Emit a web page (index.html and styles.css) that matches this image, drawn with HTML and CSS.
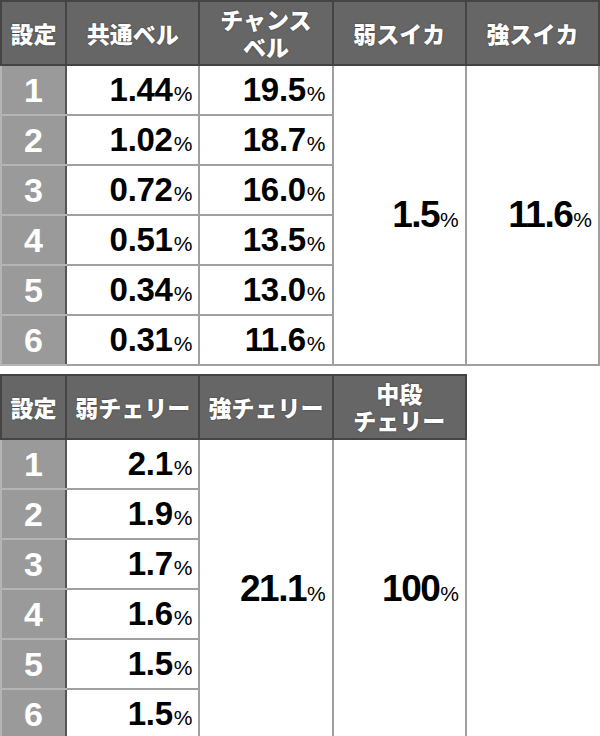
FILE: index.html
```html
<!DOCTYPE html>
<html lang="ja">
<head>
<meta charset="utf-8">
<link rel="stylesheet" href="styles.css">
</head>
<body>
<table class="tbl tbl-wide">
  <colgroup><col class="c-set"><col class="c-val"><col class="c-val"><col class="c-val"><col class="c-val"></colgroup>
  <thead>
    <tr class="head">
      <th>設定</th><th>共通ベル</th><th>チャンス<br>ベル</th><th>弱スイカ</th><th>強スイカ</th>
    </tr>
  </thead>
  <tbody>
    <tr><td class="set">1</td><td class="num">1.44<span class="pc">%</span></td><td class="num">19.5<span class="pc">%</span></td><td class="num big" rowspan="6">1.5<span class="pc">%</span></td><td class="num big" rowspan="6">11.6<span class="pc">%</span></td></tr>
    <tr><td class="set">2</td><td class="num">1.02<span class="pc">%</span></td><td class="num">18.7<span class="pc">%</span></td></tr>
    <tr><td class="set">3</td><td class="num">0.72<span class="pc">%</span></td><td class="num">16.0<span class="pc">%</span></td></tr>
    <tr><td class="set">4</td><td class="num">0.51<span class="pc">%</span></td><td class="num">13.5<span class="pc">%</span></td></tr>
    <tr><td class="set">5</td><td class="num">0.34<span class="pc">%</span></td><td class="num">13.0<span class="pc">%</span></td></tr>
    <tr><td class="set">6</td><td class="num">0.31<span class="pc">%</span></td><td class="num">11.6<span class="pc">%</span></td></tr>
  </tbody>
</table>
<table class="tbl tbl-narrow">
  <colgroup><col class="c-set"><col class="c-val"><col class="c-val"><col class="c-val"></colgroup>
  <thead>
    <tr class="head">
      <th>設定</th><th>弱チェリー</th><th>強チェリー</th><th>中段<br>チェリー</th>
    </tr>
  </thead>
  <tbody>
    <tr><td class="set">1</td><td class="num">2.1<span class="pc">%</span></td><td class="num big" rowspan="6">21.1<span class="pc">%</span></td><td class="num big" rowspan="6">100<span class="pc">%</span></td></tr>
    <tr><td class="set">2</td><td class="num">1.9<span class="pc">%</span></td></tr>
    <tr><td class="set">3</td><td class="num">1.7<span class="pc">%</span></td></tr>
    <tr><td class="set">4</td><td class="num">1.6<span class="pc">%</span></td></tr>
    <tr><td class="set">5</td><td class="num">1.5<span class="pc">%</span></td></tr>
    <tr><td class="set">6</td><td class="num">1.5<span class="pc">%</span></td></tr>
  </tbody>
</table>
</body>
</html>
```
FILE: styles.css
```css
html, body {
  margin: 0;
  padding: 0;
  background: #ffffff;
}
body {
  font-family: "Liberation Sans", Arial, "Noto Sans CJK JP", sans-serif;
}
.tbl {
  border-collapse: collapse;
  table-layout: fixed;
}
.tbl-wide {
  width: 600px;
}
.tbl-narrow {
  width: 467px;
  margin-top: 8px;
}
.c-set { width: 65px; }
.c-val { width: 133px; }
.head th {
  height: 62px;
  padding: 0;
  background: #666666;
  color: #ffffff;
  border: 2px solid #444444;
  font-family: "Noto Sans CJK JP", sans-serif;
  font-weight: 900;
  font-size: 23px;
  line-height: 27px;
  text-align: center;
  vertical-align: middle;
  text-shadow: 0 0 2px rgba(0,0,0,0.45);
}
.tbl td {
  height: 48px;
  padding: 0;
  border: 2px solid #a0a0a0;
  vertical-align: middle;
}
.tbl td.set {
  background: #9a9a9a;
  color: #ffffff;
  text-align: center;
  font-weight: 700;
  font-size: 34px;
  border-color: #b5b5b5;
  border-right: 2px solid #555555;
}
.tbl td.num {
  text-align: right;
  padding-right: 6px;
  font-weight: 700;
  font-size: 33px;
  color: #000000;
  letter-spacing: -0.3px;
}
.tbl td.num.big {
  font-size: 37px;
  letter-spacing: -1.5px;
}
.pc {
  font-size: 21px;
  font-weight: 400;
  letter-spacing: 0;
  margin-left: 1px;
}
```
